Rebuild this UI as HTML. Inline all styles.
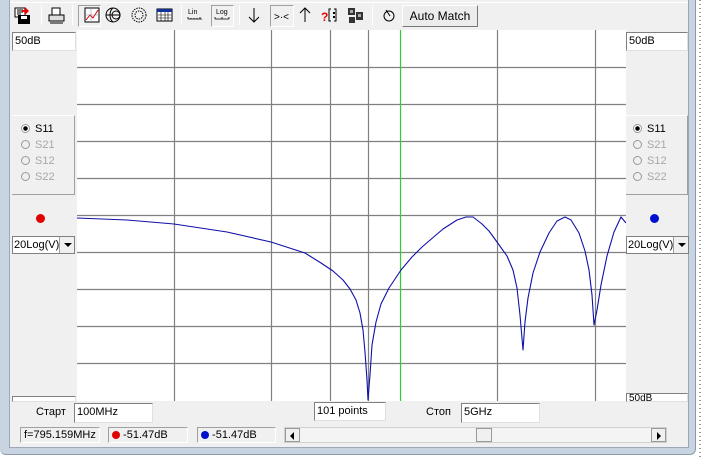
<!DOCTYPE html>
<html><head><meta charset="utf-8"><style>
*{margin:0;padding:0;box-sizing:border-box}
body{width:707px;height:458px;overflow:hidden;background:#fff;font-family:"Liberation Sans",sans-serif;font-size:11px;position:relative}
.a{position:absolute}
.win{left:0;top:0;width:696px;height:455px;background:#c8d4e2;border-right:1px solid #8a9bb0;border-bottom:1px solid #8a9bb0;border-radius:0 0 6px 6px}
.inner{left:9px;top:0;width:680px;height:448px;background:#f0f0f0;border:1px solid #9aa8b8;border-top:none}
.box{background:#fff;border:1px solid #808080;border-right-color:#e0e0e0;border-bottom-color:#e0e0e0;padding-left:2px;font-size:11px;line-height:16px}
.sunk{border:1px solid #a0a0a0;border-right-color:#fff;border-bottom-color:#fff;padding-left:3px;line-height:14px}
.sep{width:1px;height:20px;top:5px;background:#b0b0b0;border-right:1px solid #fff}
.pr{border:1px solid #a0a0a0;border-right-color:#fff;border-bottom-color:#fff;background:#f8f8f8}
.rad{font-size:11px;line-height:16px}
.rad span{display:inline-block;width:9px;height:9px;border:1px solid #999;border-radius:50%;margin-right:5px;vertical-align:-1px}
.dis{color:#a8a8a8}
.dd{width:63px;height:18px;background:#fff;border:1px solid #808080;font-size:11px;line-height:16px;padding-left:1px;overflow:hidden;white-space:nowrap}
.dd i{position:absolute;right:0;top:0;width:15px;height:16px;background:#f0f0f0;border-left:1px solid #a0a0a0}
.dd i:after{content:"";position:absolute;left:4px;top:6px;border:4px solid transparent;border-top:4px solid #000;border-bottom:0}
</style></head><body>
<div class="a" style="left:699px;top:0;width:2px;height:458px;background-image:linear-gradient(#999 1px,transparent 1px);background-size:2px 4px"></div>
<div class="a win"></div>
<div class="a inner"></div>
<div class="a" style="left:10px;top:2px;width:678px;height:1px;background:#fff"></div>
<svg class="a" style="left:10px;top:3px" width="480" height="27">
<g transform="translate(-10,-3)">
<rect x="15" y="8" width="10" height="9" fill="#fff" stroke="#000"/><path d="M17 10h6M17 12h6M17 14h4" stroke="#000"/>
<rect x="18" y="15" width="12" height="9" fill="#000"/><rect x="21" y="16" width="6" height="3" fill="#fff"/><path d="M25 7l4 4-4 4z" fill="#e00"/><rect x="22" y="10" width="4" height="2" fill="#e00"/>
<rect x="52" y="8" width="8" height="8" fill="#fff" stroke="#000"/><rect x="49" y="15" width="15" height="6" fill="#ddd" stroke="#000"/><path d="M50 23h13" stroke="#000"/>
<rect x="85" y="8" width="14" height="14" fill="#fff" stroke="#000"/><path d="M86 20l4-5 3 3 5-8" stroke="#d00" fill="none"/><path d="M86 15h12M91 9v12" stroke="#88a" stroke-width=".5"/>
<circle cx="113" cy="15" r="7" fill="none" stroke="#000"/><path d="M106 15h14M113 8c-4 3-4 11 0 14" stroke="#000" fill="none"/><circle cx="116" cy="15" r="4" fill="none" stroke="#000"/>
<circle cx="139" cy="15" r="7" fill="none" stroke="#000" stroke-dasharray="1.5 1"/><circle cx="139" cy="15" r="4" fill="none" stroke="#000" stroke-dasharray="1.5 1"/>
<rect x="157" y="9" width="15" height="12" fill="#fff" stroke="#000"/><rect x="157" y="9" width="15" height="3" fill="#113399"/><path d="M158 15h13M158 18h13M161 12v9M165 12v9M168 12v9" stroke="#000" stroke-width=".6"/>
<text x="188" y="14" font-size="7" font-family="Liberation Sans">Lin</text><path d="M188 19h14M188 17v2M191 18v1M194 18v1M197 18v1M200 17v2" stroke="#000" stroke-width=".8"/>
<text x="216" y="14" font-size="7" font-family="Liberation Sans">Log</text><path d="M215 19h14M215 17v2M222 17v2M229 17v2" stroke="#000" stroke-width=".8"/>
<path d="M254 8v14M249 17l5 5 5-5" stroke="#000" fill="none"/>
<text x="274" y="20" font-size="10" font-family="Liberation Sans">&gt;·&lt;</text>
<path d="M305 8v14M300 13l5-5 5 5" stroke="#000" fill="none"/>
<text x="321" y="21" font-size="12" font-weight="bold" fill="#e00" font-family="Liberation Sans">?</text><path d="M331 9h-2v12h2M334 9h2v12h-2" stroke="#000" fill="none"/><rect x="333" y="12" width="2" height="2"/><rect x="333" y="16" width="2" height="2"/>
<g fill="#333"><rect x="348" y="8" width="7" height="7"/><rect x="356" y="12" width="7" height="8"/><rect x="349" y="17" width="6" height="6"/></g><g fill="#aaa"><rect x="350" y="10" width="3" height="3"/><rect x="358" y="14" width="3" height="3"/></g>
<circle cx="389" cy="16" r="5" fill="none" stroke="#000"/><path d="M386 10l4 6" stroke="#000"/>
</g></svg>
<div class="a pr" style="left:78px;top:5px;width:23px;height:22px;background:none"></div>
<div class="a pr" style="left:211px;top:5px;width:23px;height:22px;background:none"></div>
<div class="a pr" style="left:270px;top:5px;width:24px;height:22px;background:none"></div>
<div class="a sep" style="left:41px"></div><div class="a sep" style="left:72px"></div><div class="a sep" style="left:181px"></div><div class="a sep" style="left:239px"></div><div class="a sep" style="left:372px"></div>
<div class="a" style="left:402px;top:5px;width:76px;height:22px;background:#ececec;border:1px solid #fff;border-right-color:#777;border-bottom-color:#777;text-align:center;line-height:20px;font-size:12px">Auto Match</div>
<svg class="a" style="left:77px;top:30px" width="549" height="371">
<rect width="549" height="371" fill="#fff"/>
<g stroke="#808080" stroke-width="1.2">
<path d="M97.5 0v371M194.5 0v371M253.5 0v371M291.5 0v371M420.5 0v371M518.5 0v371"/>
<path d="M0 37.5h549M0 74.5h549M0 111.5h549M0 148.5h549M0 185.5h549M0 222.5h549M0 259.5h549M0 296.5h549M0 333.5h549"/>
</g>
<path d="M323.5 0v371" stroke="#2ed02e" stroke-width="1.2"/>
<polyline fill="none" stroke="#1010a8" stroke-width="1.1" stroke-linejoin="round" points="0,188 50,190 97,194 150,202 194,212 228,223 244,233 256,241 266,250 273,259 279,270 283,283 286,300 288,322 290,350 291,370 293,345 295,315 299,292 304,274 312,258 324,240 335,227 345,217 366,199 380,190 389,187 396,187 405,194 412,201 420,212 430,226 436,240 440,258 443,285 446,320 448,292 451,268 456,243 463,222 472,203 480,191 488,187 494,190 502,203 508,221 512,240 515,265 517,295 520,280 524,255 530,226 537,202 544,187 549,193"/>
</svg>
<div class="a box" style="left:12px;top:32px;width:64px;height:19px">50dB</div>
<div class="a" style="left:12px;top:115px;width:63px;height:80px;border-top:1px solid #fff;border-bottom:1px solid #a0a0a0;border-right:1px solid #a0a0a0"></div>
<div class="a rad" style="left:21px;top:121px"><span style="background:radial-gradient(#000 2px,#fff 2.5px)"></span>S11</div>
<div class="a rad dis" style="left:21px;top:137px"><span></span>S21</div>
<div class="a rad dis" style="left:21px;top:153px"><span></span>S12</div>
<div class="a rad dis" style="left:21px;top:169px"><span></span>S22</div>
<div class="a" style="left:36px;top:214px;width:9px;height:9px;border-radius:50%;background:#e00000"></div>
<div class="a dd" style="left:12px;top:236px">20Log(V)<i></i></div>
<div class="a box" style="left:12px;top:396px;width:64px;height:6px;overflow:hidden;line-height:6px;font-size:9px"></div>
<div class="a box" style="left:626px;top:32px;width:62px;height:19px">50dB</div>
<div class="a" style="left:626px;top:115px;width:62px;height:80px;border-top:1px solid #fff;border-bottom:1px solid #a0a0a0;border-right:1px solid #a0a0a0"></div>
<div class="a rad" style="left:633px;top:121px"><span style="background:radial-gradient(#000 2px,#fff 2.5px)"></span>S11</div>
<div class="a rad dis" style="left:633px;top:137px"><span></span>S21</div>
<div class="a rad dis" style="left:633px;top:153px"><span></span>S12</div>
<div class="a rad dis" style="left:633px;top:169px"><span></span>S22</div>
<div class="a" style="left:650px;top:214px;width:9px;height:9px;border-radius:50%;background:#0010d0"></div>
<div class="a dd" style="left:626px;top:236px">20Log(V)<i></i></div>
<div class="a box" style="left:626px;top:393px;width:62px;height:9px;overflow:hidden;line-height:9px;font-size:10px">50dB</div>
<div class="a" style="left:36px;top:406px;font-size:11px">Старт</div>
<div class="a box" style="left:74px;top:403px;width:79px;height:20px">100MHz</div>
<div class="a box" style="left:314px;top:402px;width:72px;height:19px">101 points</div>
<div class="a" style="left:426px;top:406px;font-size:11px">Стоп</div>
<div class="a box" style="left:461px;top:403px;width:79px;height:20px">5GHz</div>
<div class="a sunk" style="left:20px;top:427px;width:80px;height:16px">f=795.159MHz</div>
<div class="a sunk" style="left:108px;top:427px;width:80px;height:16px"><span style="display:inline-block;width:8px;height:8px;border-radius:50%;background:#e00000;vertical-align:-1px"></span> -51.47dB</div>
<div class="a sunk" style="left:197px;top:427px;width:79px;height:16px"><span style="display:inline-block;width:8px;height:8px;border-radius:50%;background:#0010d0;vertical-align:-1px"></span> -51.47dB</div>
<div class="a" style="left:284px;top:427px;width:383px;height:16px;background:#f4f4f4;border:1px solid #d0d0d0"></div>
<div class="a" style="left:285px;top:428px;width:15px;height:14px;background:#f0f0f0;border:1px solid #999"><div class="a" style="left:4px;top:3px;border:4px solid transparent;border-right:4px solid #000;border-left:0"></div></div>
<div class="a" style="left:651px;top:428px;width:15px;height:14px;background:#f0f0f0;border:1px solid #999"><div class="a" style="left:5px;top:3px;border:4px solid transparent;border-left:4px solid #000;border-right:0"></div></div>
<div class="a" style="left:476px;top:428px;width:16px;height:14px;background:#f0f0f0;border:1px solid #999"></div>
</body></html>
